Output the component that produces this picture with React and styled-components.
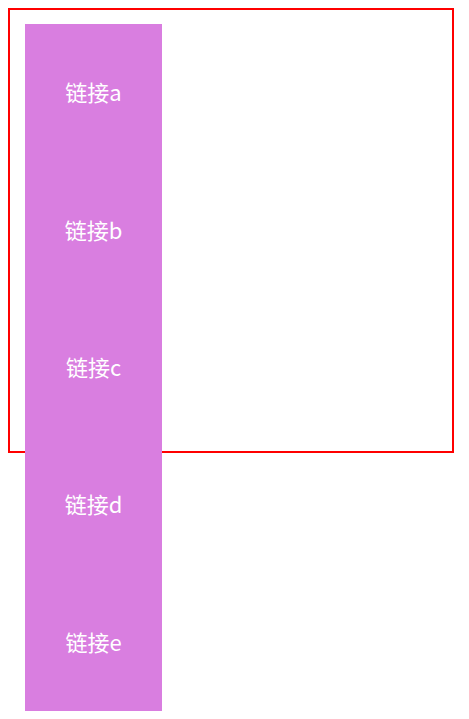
import React from "react";
import styled, { createGlobalStyle } from "styled-components";

const GlobalStyle = createGlobalStyle`
  body {
    margin: 8px;
    font-family: "Noto Sans CJK SC", "Noto Sans", sans-serif;
  }
`;

const Page = styled.div`
  display: grid;
  grid-template-columns: 1fr;
`;

const Frame = styled.div`
  grid-area: 1 / 1;
  box-sizing: border-box;
  width: 446px;
  height: 445px;
  border: 2px solid #ff0000;
`;

const Nav = styled.ul`
  grid-area: 1 / 1;
  align-self: start;
  list-style: none;
  margin: 16px 0 0 17px;
  padding: 0;
  width: 137px;
  background-color: #d97ee0;
`;

const NavItem = styled.li`
  box-sizing: border-box;
  height: 137.4px;
  padding-bottom: 3px;
  display: flex;
  align-items: center;
  justify-content: center;
`;

const NavLink = styled.a`
  color: #ffffff;
  font-size: 22px;
  font-weight: 400;
  text-decoration: none;
`;

const links = ["链接a", "链接b", "链接c", "链接d", "链接e"];

export default function App() {
  return (
    <>
      <GlobalStyle />
      <Page>
        <Frame />
        <Nav>
          {links.map((l) => (
            <NavItem key={l}>
              <NavLink href="#">{l}</NavLink>
            </NavItem>
          ))}
        </Nav>
      </Page>
    </>
  );
}
